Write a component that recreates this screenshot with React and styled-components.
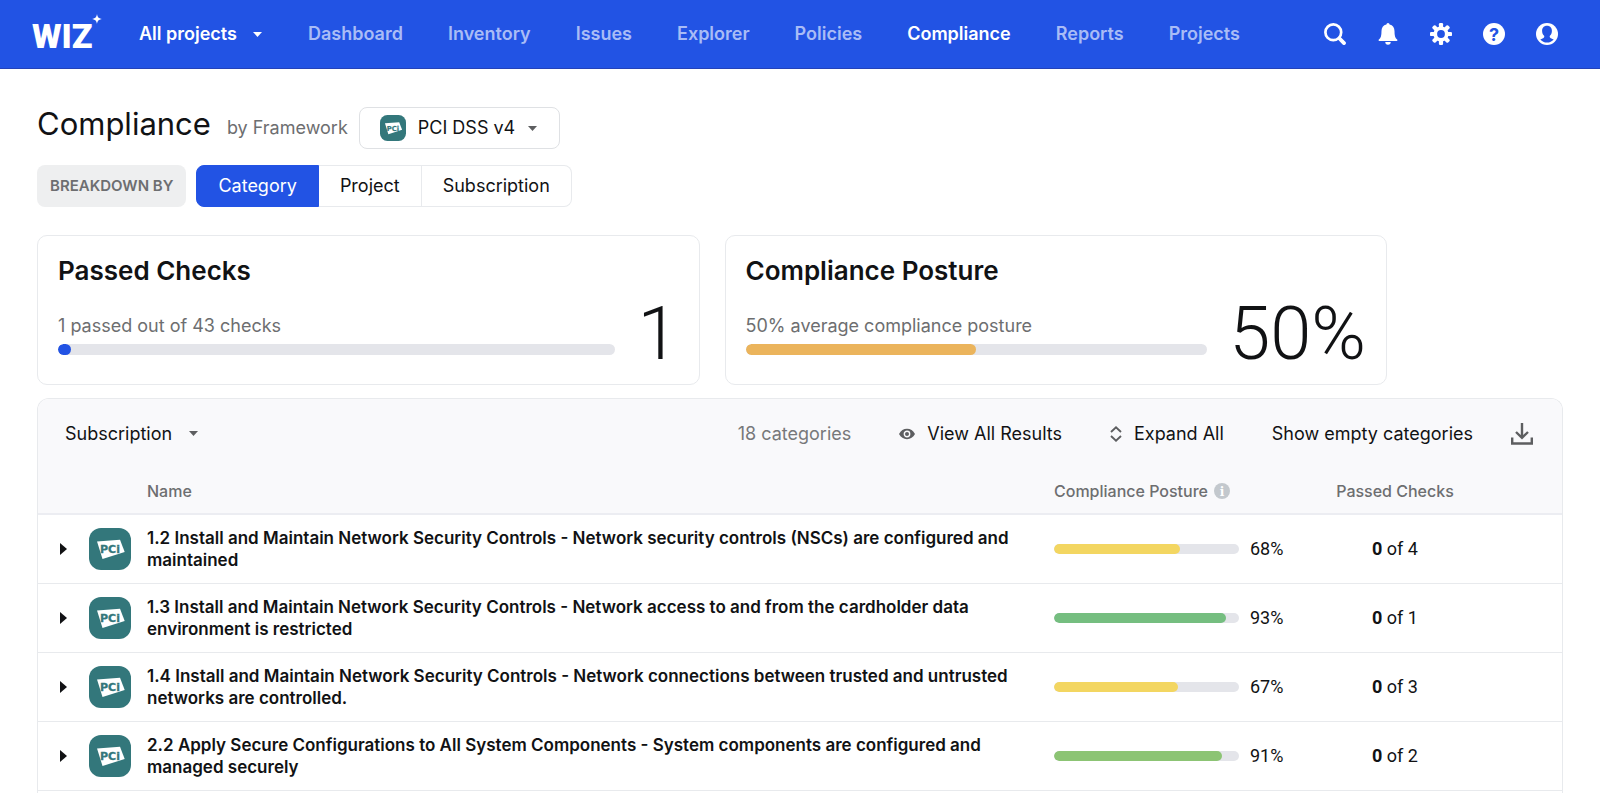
import React from "react";
import styled, { createGlobalStyle } from "styled-components";

const blue = "#2253e4";
const ink = "#111214";
const grey = "#6d6e70";
const line = "#e8eaed";

const GlobalStyle = createGlobalStyle`
  * { box-sizing: border-box; }
  body {
    margin: 0;
    background: #fff;
    color: ${ink};
    font-family: Inter, "Liberation Sans", sans-serif;
    font-size: 18px;
    line-height: 24px;
    overflow: hidden auto;
    scrollbar-width: none;
  }
  button, select { font: inherit; color: inherit; background: none; border: 0; padding: 0; margin: 0; cursor: pointer; }
  svg { display: block; flex: none; }
  h1, h2, p { margin: 0; }
`;

/* Top bar */
const TopBar = styled.header`
  display: flex;
  align-items: center;
  height: 69px;
  padding: 0 42px 0 32px;
  background: ${blue};
  border-bottom: 1px solid #2442b8;
  color: #fff;
`;
const Logo = styled.a`
  display: flex;
  align-items: flex-end;
  width: 68px;
  height: 40px;
  color: #fff;
  text-decoration: none;
`;
const Wordmark = styled.span`
  font: 900 34px/36px Roboto, sans-serif;
`;
const Sparkle = styled.svg`
  align-self: flex-start;
  margin-left: -1px;
`;
const PickerLabel = styled.label`
  display: inline-flex;
  align-items: center;
  gap: ${(p) => p.$gap}px;
`;
const BareSelect = styled.select`
  appearance: none;
  outline: 0;
  font-weight: ${(p) => (p.$strong ? 600 : 400)};
`;
const ProjectPicker = styled(PickerLabel)`
  margin-left: 39px;
`;
const Nav = styled.nav`
  display: flex;
  gap: 45px;
  margin-left: 46px;
  margin-right: auto;
`;
const NavLink = styled.a`
  color: ${(p) => (p.$active ? "#fff" : "#a9bcf6")};
  font-weight: 600;
  text-decoration: none;
`;
const Tools = styled.div`
  display: flex;
  gap: 31px;
`;
const IconButton = styled.button`
  display: flex;
`;

/* Page */
const Main = styled.main`
  padding: 38px 37px 0;
`;
const TitleRow = styled.div`
  display: flex;
  align-items: center;
`;
const Title = styled.h1`
  padding-bottom: 8px;
  font-size: 31px;
  font-weight: 400;
  line-height: 34px;
`;
const ByLine = styled.span`
  margin: 0 11px 0 16px;
  color: ${grey};
`;
const FrameworkPicker = styled(PickerLabel)`
  height: 42px;
  padding: 0 22px 0 20px;
  border: 1px solid #dfe1e4;
  border-radius: 8px;
`;
const Breakdown = styled.div`
  display: flex;
  gap: 10px;
  margin-top: 16px;
`;
const BreakdownLabel = styled.span`
  height: 42px;
  padding: 0 13px;
  border-radius: 8px;
  background: #eeeff0;
  color: ${grey};
  font-size: 15px;
  font-weight: 600;
  line-height: 42px;
`;
const Segments = styled.div`
  display: flex;
`;
const Segment = styled.button`
  height: 42px;
  padding: 0 21px;
  border: 1px solid ${(p) => (p.$on ? blue : line)};
  background: ${(p) => (p.$on ? blue : "#fff")};
  color: ${(p) => (p.$on ? "#fff" : ink)};
  & + & { border-left-width: 0; }
  &:first-child { border-radius: 8px 0 0 8px; }
  &:last-child { border-radius: 0 8px 8px 0; }
`;

const Cards = styled.div`
  display: grid;
  grid-template-columns: 1fr 1fr;
  gap: 25px;
  margin: 28px 176px 13px 0;
`;
const Card = styled.section`
  padding: 19px 20px 21px;
  border: 1px solid ${line};
  border-radius: 10px;
`;
const CardTitle = styled.h2`
  font-size: 26px;
  font-weight: 600;
  line-height: 32px;
`;
const CardBody = styled.div`
  display: flex;
  align-items: center;
  gap: 22px;
  margin-top: 18px;
`;
const Measure = styled.div`
  display: grid;
  gap: 6px;
  flex: 1;
  color: ${grey};
`;
const BigNumber = styled.div`
  font: 300 74px/58px Roboto, sans-serif;
`;
const Track = styled.div`
  width: ${(p) => p.$width || "auto"};
  height: ${(p) => p.$height}px;
  border-radius: 6px;
  background: #e4e5ea;
  overflow: hidden;
`;
const Fill = styled.div`
  height: 100%;
  min-width: 13px;
  border-radius: 6px;
  background: ${(p) => p.$color};
`;

/* Results panel */
const Panel = styled.section`
  padding-bottom: 2px;
  border: 1px solid ${line};
  border-bottom: 0;
  border-radius: 12px 12px 0 0;
  overflow: hidden;
`;
const Toolbar = styled.div`
  display: flex;
  align-items: center;
  justify-content: space-between;
  height: 69px;
  padding: 0 29px 0 27px;
  background: #f9f9fb;
`;
const Actions = styled.div`
  display: flex;
  align-items: center;
  gap: ${(p) => p.$gap}px;
`;
const Count = styled.span`
  color: #77787a;
`;
const Action = styled.button`
  display: flex;
  align-items: center;
  gap: 12px;
`;
const Table = styled.table`
  width: 100%;
  table-layout: fixed;
  border-spacing: 0;
`;
const Col = styled.col`
  width: ${(p) => p.$w};
`;
const Th = styled.th`
  height: 47px;
  padding: 0;
  background: #f9f9fb;
  border-bottom: 2px solid #ecedf2;
  color: ${grey};
  font-size: 16px;
  font-weight: 500;
  text-align: ${(p) => p.$align || "left"};
`;
const WithInfo = styled.span`
  display: flex;
  align-items: center;
  gap: 6px;
`;
const Td = styled.td`
  height: 69px;
  padding: 0;
  border-bottom: 1px solid ${line};
  font: 400 18px/22px Roboto, sans-serif;
  text-align: ${(p) => p.$align || "left"};
`;
const NameTd = styled(Td)`
  padding-right: 24px;
  font: 600 17px/22px Inter, sans-serif;
`;
const Expander = styled.button`
  display: flex;
  padding: 4px 8px;
  margin-left: 14px;
`;
const Score = styled.div`
  display: flex;
  align-items: center;
  gap: 11px;
`;

const Caret = ({ color = "#5d5e60" }) => (
  <svg width="9" height="5" viewBox="0 0 9 5" fill={color}><path d="M0 0h9L4.500 5z" /></svg>
);
const PciIcon = ({ size }) => (
  <svg width={size} height={size} viewBox="0 0 42 42" aria-hidden="true">
    <rect width="42" height="42" rx="12" fill="#33777b" />
    <path d="M8 13.500 31 11.800 35.700 24 13.500 31z" fill="#fff" />
    <text x="11" y="25.300" fontFamily="DejaVu Sans" fontWeight="700" fontSize="11" stroke="#33777b" strokeWidth=".3" fill="#33777b">PCi</text>
  </svg>
);
const SearchIcon = () => (
  <svg width="22" height="22" viewBox="0 0 22 22" fill="none" stroke="currentColor">
    <circle cx="9.300" cy="9.300" r="7.900" strokeWidth="2.700" />
    <path d="m15.500 15.500 4.500 4.600" strokeWidth="3.800" strokeLinecap="round" />
  </svg>
);
const BellIcon = () => (
  <svg width="22" height="22" viewBox="0 0 22 22" fill="currentColor">
    <path d="M11 0a1.600 1.600 0 0 1 1.600 1.500C15.800 2.200 17.500 4.800 17.500 8c0 4.500.6 7 2.600 8.500.6.500.4 1.500-.5 1.500H2.400c-.9 0-1.100-1-.5-1.500C3.900 15 4.500 12.500 4.500 8c0-3.200 1.700-5.800 4.900-6.500A1.600 1.600 0 0 1 11 0zM8.300 19h5.400a2.700 2.700 0 0 1-5.400 0z" />
  </svg>
);
const GearIcon = () => (
  <svg width="22" height="22" viewBox="0 0 22 22">
    <g fill="currentColor">
      {[0, 45, 90, 135].map((a) => (
        <rect key={a} x="8.900" y="0" width="4.200" height="22" rx="1.200" transform={`rotate(${a} 11 11)`} />
      ))}
      <circle cx="11" cy="11" r="7.600" />
    </g>
    <circle cx="11" cy="11" r="3.900" fill={blue} />
  </svg>
);
const HelpIcon = () => (
  <svg width="22" height="22" viewBox="0 0 22 22">
    <circle cx="11" cy="11" r="11" fill="currentColor" />
    <text x="11" y="17.500" textAnchor="middle" fontFamily="Inter" fontWeight="700" fontSize="18" fill={blue}>?</text>
  </svg>
);
const UserIcon = () => (
  <svg width="22" height="22" viewBox="0 0 22 22">
    <circle cx="11" cy="11" r="11" fill="currentColor" />
    <path d="M11 2.800c3.200 0 4.900 2.200 4.900 5.200 0 2.200-.9 3.900-2.200 5 0 1.700.3 2.100 4 3.500a8.800 8.800 0 0 1-13.400 0c3.700-1.400 4-1.800 4-3.500-1.300-1.100-2.200-2.800-2.200-5 0-3 1.700-5.200 4.900-5.200z" fill={blue} />
  </svg>
);
const EyeIcon = () => (
  <svg width="16" height="12" viewBox="0 0 16 12">
    <path d="M0 6c1.800-3.300 4.600-5.200 8-5.200S14.200 2.700 16 6c-1.800 3.300-4.600 5.200-8 5.200S1.800 9.300 0 6z" fill="#5d5e60" />
    <circle cx="8" cy="6" r="2.700" fill="none" stroke="#f9f9fb" strokeWidth="1.400" />
  </svg>
);
const ExpandIcon = () => (
  <svg width="12" height="16" viewBox="0 0 12 16" fill="none" stroke="#5d5e60" strokeWidth="1.900">
    <path d="m1 6 5-4.600L11 6M1 10l5 4.600L11 10" />
  </svg>
);
const DownloadIcon = () => (
  <svg width="22" height="22" viewBox="0 0 22 22" fill="none" stroke="#5d5e60" strokeWidth="2.400">
    <path d="M11 0v14M5 9l6 5.800L17 9M1.200 14.500v6h19.600v-6" />
  </svg>
);
const InfoIcon = () => (
  <svg width="16" height="16" viewBox="0 0 16 16">
    <circle cx="8" cy="8" r="8" fill="#c3c8cd" />
    <text x="8" y="12.500" textAnchor="middle" fontFamily="DejaVu Serif" fontWeight="700" fontSize="12" fill="#fff">i</text>
  </svg>
);

const navItems = ["Dashboard", "Inventory", "Issues", "Explorer", "Policies", "Compliance", "Reports", "Projects"];
const tools = [
  ["Search", SearchIcon],
  ["Notifications", BellIcon],
  ["Settings", GearIcon],
  ["Help", HelpIcon],
  ["Account", UserIcon],
];
const rows = [
  { name: "1.2 Install and Maintain Network Security Controls - Network security controls (NSCs) are configured and maintained", score: 68, color: "#f3d661", total: 4 },
  { name: "1.3 Install and Maintain Network Security Controls - Network access to and from the cardholder data environment is restricted", score: 93, color: "#75be80", total: 1 },
  { name: "1.4 Install and Maintain Network Security Controls - Network connections between trusted and untrusted networks are controlled.", score: 67, color: "#f3d661", total: 3 },
  { name: "2.2 Apply Secure Configurations to All System Components - System components are configured and managed securely", score: 91, color: "#8cc474", total: 2 },
];

function Bar({ value, color, height, width }) {
  return (
    <Track $height={height} $width={width}>
      <Fill $color={color} style={{ width: `${value}%` }} />
    </Track>
  );
}

function StatCard({ title, caption, value, color, figure }) {
  return (
    <Card>
      <CardTitle>{title}</CardTitle>
      <CardBody>
        <Measure>
          <p>{caption}</p>
          <Bar value={value} color={color} height={11} />
        </Measure>
        <BigNumber>{figure}</BigNumber>
      </CardBody>
    </Card>
  );
}

export default function App() {
  const [segment, setSegment] = React.useState("Category");
  return (
    <>
      <GlobalStyle />
      <TopBar>
        <Logo href="#" aria-label="Wiz home">
          <Wordmark>WIZ</Wordmark>
          <Sparkle width="10" height="10" viewBox="0 0 10 10" fill="currentColor">
            <path d="M5 0c.5 3.200 1.500 4.300 5 5-3.500.7-4.500 1.800-5 5-.5-3.200-1.500-4.300-5-5 3.500-.7 4.500-1.800 5-5z" />
          </Sparkle>
        </Logo>
        <ProjectPicker $gap={16}>
          <BareSelect $strong aria-label="Project">
            <option>All projects</option>
          </BareSelect>
          <Caret color="#fff" />
        </ProjectPicker>
        <Nav>
          {navItems.map((n) => (
            <NavLink key={n} href="#" $active={n === "Compliance"}>{n}</NavLink>
          ))}
        </Nav>
        <Tools>
          {tools.map(([label, Icon]) => (
            <IconButton key={label} aria-label={label}><Icon /></IconButton>
          ))}
        </Tools>
      </TopBar>
      <Main>
        <TitleRow>
          <Title>Compliance</Title>
          <ByLine>by Framework</ByLine>
          <FrameworkPicker $gap={12}>
            <PciIcon size={26} />
            <BareSelect aria-label="Framework">
              <option>PCI DSS v4</option>
            </BareSelect>
            <Caret />
          </FrameworkPicker>
        </TitleRow>
        <Breakdown>
          <BreakdownLabel id="breakdown">BREAKDOWN BY</BreakdownLabel>
          <Segments role="group" aria-labelledby="breakdown">
            {["Category", "Project", "Subscription"].map((s) => (
              <Segment key={s} $on={s === segment} aria-pressed={s === segment} onClick={() => setSegment(s)}>{s}</Segment>
            ))}
          </Segments>
        </Breakdown>
        <Cards>
          <StatCard title="Passed Checks" caption="1 passed out of 43 checks" value={100 / 43} color={blue} figure="1" />
          <StatCard title="Compliance Posture" caption="50% average compliance posture" value={50} color="#ebb45c" figure="50%" />
        </Cards>
        <Panel>
          <Toolbar>
            <PickerLabel $gap={16}>
              <BareSelect aria-label="Group by">
                <option>Subscription</option>
              </BareSelect>
              <Caret />
            </PickerLabel>
            <Actions $gap={38}>
              <Actions $gap={48}>
                <Count>18 categories</Count>
                <Action><EyeIcon />View All Results</Action>
                <Action><ExpandIcon />Expand All</Action>
                <Action>Show empty categories</Action>
              </Actions>
              <IconButton aria-label="Download"><DownloadIcon /></IconButton>
            </Actions>
          </Toolbar>
          <Table>
            <colgroup>
              <Col $w="51px" />
              <Col $w="58px" />
              <Col $w="auto" />
              <Col $w="256px" />
              <Col $w="170px" />
              <Col $w="82px" />
            </colgroup>
            <thead>
              <tr>
                <Th colSpan={2} />
                <Th>Name</Th>
                <Th><WithInfo>Compliance Posture<InfoIcon /></WithInfo></Th>
                <Th $align="center">Passed Checks</Th>
                <Th />
              </tr>
            </thead>
            <tbody>
              {rows.map((r) => (
                <tr key={r.name}>
                  <Td>
                    <Expander aria-label="Expand row">
                      <svg width="7" height="12" viewBox="0 0 7 12" fill={ink}><path d="M0 0v12l7-6z" /></svg>
                    </Expander>
                  </Td>
                  <Td><PciIcon size={42} /></Td>
                  <NameTd>{r.name}</NameTd>
                  <Td>
                    <Score>
                      <Bar value={r.score} color={r.color} height={10} width="185px" />
                      {r.score}%
                    </Score>
                  </Td>
                  <Td $align="center"><b>0</b> of {r.total}</Td>
                  <Td />
                </tr>
              ))}
            </tbody>
          </Table>
        </Panel>
      </Main>
    </>
  );
}
